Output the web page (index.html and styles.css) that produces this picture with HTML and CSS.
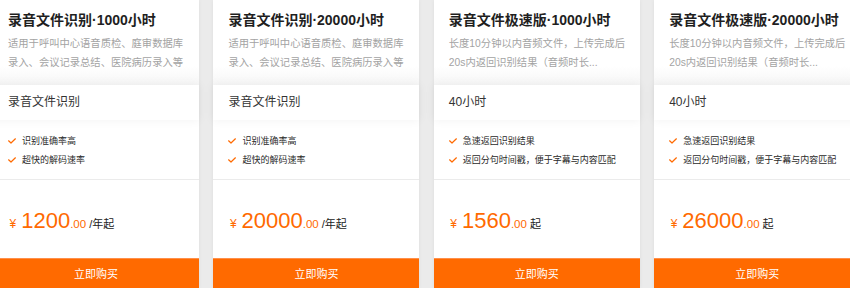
FILE: index.html
```html
<!DOCTYPE html>
<html lang="zh-CN">
<head>
<meta charset="utf-8">
<title>录音文件识别</title>
<link rel="stylesheet" href="styles.css">
</head>
<body>
<div class="cards">
  <div class="card">
    <div class="head">
      <h3 class="title">录音文件识别·1000小时</h3>
      <p class="desc">适用于呼叫中心语音质检、庭审数据库录入、会议记录总结、医院病历录入等</p>
    </div>
    <div class="spec">录音文件识别</div>
    <ul class="features">
      <li><svg class="check" viewBox="0 0 8 6" width="8" height="6"><path d="M0.6 2.8 L3 5 L7.4 0.8"/></svg>识别准确率高</li>
      <li><svg class="check" viewBox="0 0 8 6" width="8" height="6"><path d="M0.6 2.8 L3 5 L7.4 0.8"/></svg>超快的解码速率</li>
    </ul>
    <div class="price"><span class="cur">¥</span><span class="int">1200</span><span class="dec">.00</span><span class="unit">/年起</span></div>
    <a class="buy" href="#">立即购买</a>
  </div>
  <div class="card">
    <div class="head">
      <h3 class="title">录音文件识别·20000小时</h3>
      <p class="desc">适用于呼叫中心语音质检、庭审数据库录入、会议记录总结、医院病历录入等</p>
    </div>
    <div class="spec">录音文件识别</div>
    <ul class="features">
      <li><svg class="check" viewBox="0 0 8 6" width="8" height="6"><path d="M0.6 2.8 L3 5 L7.4 0.8"/></svg>识别准确率高</li>
      <li><svg class="check" viewBox="0 0 8 6" width="8" height="6"><path d="M0.6 2.8 L3 5 L7.4 0.8"/></svg>超快的解码速率</li>
    </ul>
    <div class="price"><span class="cur">¥</span><span class="int">20000</span><span class="dec">.00</span><span class="unit">/年起</span></div>
    <a class="buy" href="#">立即购买</a>
  </div>
  <div class="card">
    <div class="head">
      <h3 class="title">录音文件极速版·1000小时</h3>
      <p class="desc">长度10分钟以内音频文件，上传完成后20s内返回识别结果（音频时长...</p>
    </div>
    <div class="spec">40小时</div>
    <ul class="features">
      <li><svg class="check" viewBox="0 0 8 6" width="8" height="6"><path d="M0.6 2.8 L3 5 L7.4 0.8"/></svg>急速返回识别结果</li>
      <li><svg class="check" viewBox="0 0 8 6" width="8" height="6"><path d="M0.6 2.8 L3 5 L7.4 0.8"/></svg>返回分句时间戳，便于字幕与内容匹配</li>
    </ul>
    <div class="price"><span class="cur">¥</span><span class="int">1560</span><span class="dec">.00</span><span class="unit">起</span></div>
    <a class="buy" href="#">立即购买</a>
  </div>
  <div class="card">
    <div class="head">
      <h3 class="title">录音文件极速版·20000小时</h3>
      <p class="desc">长度10分钟以内音频文件，上传完成后20s内返回识别结果（音频时长...</p>
    </div>
    <div class="spec">40小时</div>
    <ul class="features">
      <li><svg class="check" viewBox="0 0 8 6" width="8" height="6"><path d="M0.6 2.8 L3 5 L7.4 0.8"/></svg>急速返回识别结果</li>
      <li><svg class="check" viewBox="0 0 8 6" width="8" height="6"><path d="M0.6 2.8 L3 5 L7.4 0.8"/></svg>返回分句时间戳，便于字幕与内容匹配</li>
    </ul>
    <div class="price"><span class="cur">¥</span><span class="int">26000</span><span class="dec">.00</span><span class="unit">起</span></div>
    <a class="buy" href="#">立即购买</a>
  </div>
</div>
</body>
</html>
```
FILE: styles.css
```css
* { box-sizing: border-box; }
html, body {
  margin: 0;
  padding: 0;
  background: #ebebeb;
  overflow: hidden;
}
body {
  font-family: "Liberation Sans", "Noto Sans CJK SC", sans-serif;
  color: #333;
}
.cards {
  display: flex;
  gap: 14.4px;
  margin-left: -7px;
  width: 900px;
}
.card {
  flex: 0 0 206px;
  width: 206px;
  height: 288px;
  background: #fff;
  box-shadow: 0 0 4px rgba(0, 0, 0, 0.06);
  display: flex;
  flex-direction: column;
}
.head {
  height: 85px;
  padding: 10px 11px 0 15px;
  background: linear-gradient(to bottom, #fff 78%, #f6f6f6 100%);
}
.title {
  margin: 0;
  font-size: 14px;
  line-height: 20px;
  font-weight: bold;
  color: #1f1f1f;
  white-space: nowrap;
}
.desc {
  margin: 3.5px 0 0;
  font-size: 10.3px;
  line-height: 19px;
  color: #a3a3a3;
}
.spec {
  height: 35px;
  line-height: 35px;
  padding-left: 15px;
  font-size: 12px;
  color: #333;
  background: #fff;
  box-shadow: 0 0 10px rgba(0, 0, 0, 0.06);
  position: relative;
}
.features {
  list-style: none;
  margin: 0;
  padding: 11.5px 10px 9.5px 15px;
  border-bottom: 1px solid #ebebeb;
}
.features li {
  display: flex;
  align-items: center;
  gap: 6px;
  font-size: 9px;
  line-height: 19px;
  color: #2a2a2a;
  white-space: nowrap;
}
.check {
  flex: none;
  fill: none;
  stroke: #ff6a00;
  stroke-width: 1.2;
  stroke-linecap: round;
  stroke-linejoin: round;
}
.price {
  height: 78px;
  padding: 28.4px 0 0 16.5px;
  line-height: 26px;
  color: #ff6a00;
  white-space: nowrap;
}
.cur {
  font-size: 12px;
  margin-right: 5px;
}
.int {
  font-size: 22px;
}
.dec {
  font-size: 11.5px;
}
.unit {
  font-size: 11px;
  color: #222;
  margin-left: 3px;
}
.buy {
  display: block;
  height: 30px;
  line-height: 30px;
  text-align: center;
  background: #ff6a00;
  border-top: 1px solid #ff8f4a;
  color: #fff;
  font-size: 11px;
  text-decoration: none;
}
```
